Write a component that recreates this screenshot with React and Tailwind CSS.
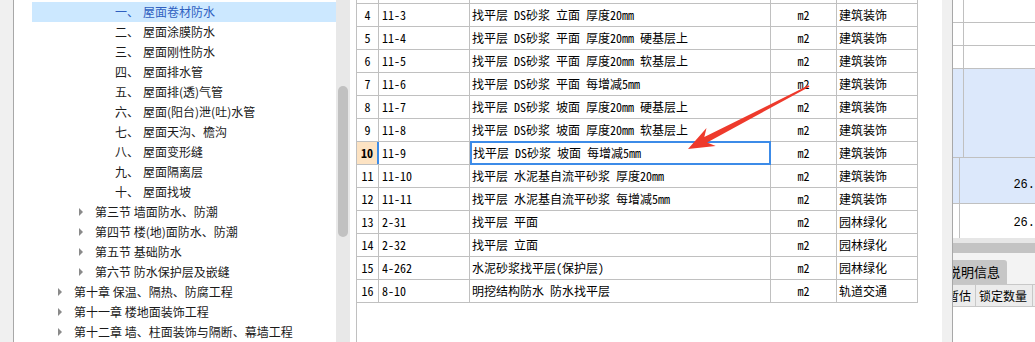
import React from 'react';

const tree = [
  { level: 3, no: '一、', text: '屋面卷材防水', selected: true },
  { level: 3, no: '二、', text: '屋面涂膜防水' },
  { level: 3, no: '三、', text: '屋面刚性防水' },
  { level: 3, no: '四、', text: '屋面排水管' },
  { level: 3, no: '五、', text: '屋面排(透)气管' },
  { level: 3, no: '六、', text: '屋面(阳台)泄(吐)水管' },
  { level: 3, no: '七、', text: '屋面天沟、檐沟' },
  { level: 3, no: '八、', text: '屋面变形缝' },
  { level: 3, no: '九、', text: '屋面隔离层' },
  { level: 3, no: '十、', text: '屋面找坡' },
  { level: 2, text: '第三节 墙面防水、防潮' },
  { level: 2, text: '第四节 楼(地)面防水、防潮' },
  { level: 2, text: '第五节 基础防水' },
  { level: 2, text: '第六节 防水保护层及嵌缝' },
  { level: 1, text: '第十章 保温、隔热、防腐工程' },
  { level: 1, text: '第十一章 楼地面装饰工程' },
  { level: 1, text: '第十二章 墙、柱面装饰与隔断、幕墙工程' },
];

// row 3 is scrolled mostly out of view, only its bottom edge shows
const rows = [
  { n: 3, code: '', name: '', unit: '', cat: '', hidden: true },
  { n: 4, code: '11-3', name: '找平层 DS砂浆 立面 厚度20mm', unit: 'm2', cat: '建筑装饰' },
  { n: 5, code: '11-4', name: '找平层 DS砂浆 平面 厚度20mm 硬基层上', unit: 'm2', cat: '建筑装饰' },
  { n: 6, code: '11-5', name: '找平层 DS砂浆 平面 厚度20mm 软基层上', unit: 'm2', cat: '建筑装饰' },
  { n: 7, code: '11-6', name: '找平层 DS砂浆 平面 每增减5mm', unit: 'm2', cat: '建筑装饰' },
  { n: 8, code: '11-7', name: '找平层 DS砂浆 坡面 厚度20mm 硬基层上', unit: 'm2', cat: '建筑装饰' },
  { n: 9, code: '11-8', name: '找平层 DS砂浆 坡面 厚度20mm 软基层上', unit: 'm2', cat: '建筑装饰' },
  { n: 10, code: '11-9', name: '找平层 DS砂浆 坡面 每增减5mm', unit: 'm2', cat: '建筑装饰', active: true },
  { n: 11, code: '11-10', name: '找平层 水泥基自流平砂浆 厚度20mm', unit: 'm2', cat: '建筑装饰' },
  { n: 12, code: '11-11', name: '找平层 水泥基自流平砂浆 每增减5mm', unit: 'm2', cat: '建筑装饰' },
  { n: 13, code: '2-31', name: '找平层 平面', unit: 'm2', cat: '园林绿化' },
  { n: 14, code: '2-32', name: '找平层 立面', unit: 'm2', cat: '园林绿化' },
  { n: 15, code: '4-262', name: '水泥砂浆找平层(保护层)', unit: 'm2', cat: '园林绿化' },
  { n: 16, code: '8-10', name: '明挖结构防水 防水找平层', unit: 'm2', cat: '轨道交通' },
];

function Caret() {
  return <span className="w-0 h-0 border-y-[4px] border-y-transparent border-l-[4px] border-l-[#8a8a8a] mr-[12px]" />;
}

function TreeRow({ item }) {
  const pad = item.level === 3 ? 'pl-[83px]' : item.level === 2 ? 'pl-[47px]' : 'pl-[26px]';
  return (
    <div
      className={`ml-[18px] h-[20px] flex items-center whitespace-nowrap ${pad} ${
        item.selected ? 'bg-[#cce8ff] text-[#2f5fbf]' : 'text-[#1a1a1a]'
      }`}
    >
      {item.level === 3 ? (
        <>
          <span className="w-[28px]">{item.no}</span>
          <span>{item.text}</span>
        </>
      ) : (
        <>
          <Caret />
          <span>{item.text}</span>
        </>
      )}
    </div>
  );
}

function GridRow({ r }) {
  return (
    <div className="flex h-[23px] border-b border-[#c0c0c0]">
      <div
        className={`w-[22px] shrink-0 border-r flex items-center justify-center text-[12px] ${
          r.active ? 'bg-[#fde3c3] font-bold border-[#3c8be8] border-r-2' : 'border-[#c0c0c0]'
        }`}
      >
        {r.hidden ? '' : r.n}
      </div>
      <div className="w-[91px] shrink-0 border-r border-[#c0c0c0] flex items-center pl-[3px]">{r.code}</div>
      <div
        className={`w-[301px] shrink-0 flex items-center whitespace-nowrap overflow-hidden ${
          r.active ? 'border-2 border-[#3c8be8] -mt-[1px] h-[24px] pl-[1px]' : 'border-r border-[#c0c0c0] pl-[2px]'
        }`}
      >
        {r.name}
      </div>
      <div className="w-[66px] shrink-0 border-r border-[#c0c0c0] flex items-center justify-center">{r.unit}</div>
      <div className="w-[81px] shrink-0 border-r border-[#c0c0c0] flex items-center pl-[2px]">{r.cat}</div>
    </div>
  );
}

export default function App() {
  return (
    <div
      className="relative w-[1035px] h-[342px] overflow-hidden flex bg-white text-[12px]"
      style={{ fontFamily: '"Noto Sans CJK SC", "Noto Sans", sans-serif' }}
    >
      {/* left strip */}
      <div className="w-[14px] shrink-0 bg-[#f0f0f0] border-r border-[#a8a8a8]" />

      {/* tree */}
      <div className="w-[322px] shrink-0 pt-[2px] leading-none">
        {tree.map((t, i) => (
          <TreeRow key={i} item={t} />
        ))}
      </div>

      {/* tree scrollbar */}
      <div className="w-[14px] shrink-0 bg-[#e8e8e8] pt-[86px] pl-[2px]">
        <div className="w-[10px] h-[151px] rounded-full bg-[#c1c1c1]" />
      </div>

      <div className="w-[6px] shrink-0" />

      {/* list grid */}
      <div
        className="w-[586px] shrink-0 border-l border-[#c0c0c0] leading-none text-black"
        style={{ fontFamily: '"Noto Sans Mono CJK SC", "Noto Sans CJK SC", "Liberation Mono", monospace' }}
      >
        <div className="w-[561px] -mt-[19px]">
          {rows.map((r) => (
            <GridRow key={r.n} r={r} />
          ))}
        </div>
      </div>

      {/* splitter */}
      <div className="w-[11px] shrink-0 bg-[#f0f0f0] border-r border-[#a8a8a8]" />

      {/* right panel */}
      <div className="w-[82px] shrink-0 overflow-hidden flex flex-col">
        <div className="flex flex-col">
          {[0, 1, 2].map((i) => (
            <div key={i} className="flex h-[23px] border-b border-[#c0c0c0]">
              <div className="w-[11px] border-r border-[#c0c0c0]" />
              <div className="flex-1" />
            </div>
          ))}
          <div className="flex h-[89px] border-b border-[#c0c0c0] bg-[#dce8fb]">
            <div className="w-[11px] border-r border-[#c0c0c0]" />
            <div className="flex-1" />
          </div>
          <div className="flex h-[46px] border-b border-[#c0c0c0] bg-[#dce8fb]">
            <div className="w-[11px] border-r border-[#c0c0c0]" />
            <div
              className="flex-1 pl-[53px] pt-[18px] whitespace-nowrap"
              style={{ fontFamily: '"Liberation Mono", monospace' }}
            >
              26.
            </div>
          </div>
          <div className="flex h-[34px]">
            <div className="w-[11px] border-r border-[#c0c0c0]" />
            <div
              className="flex-1 pl-[53px] pt-[10px] whitespace-nowrap"
              style={{ fontFamily: '"Liberation Mono", monospace' }}
            >
              26.
            </div>
          </div>
        </div>

        {/* horizontal scrollbar */}
        <div className="h-[18px] bg-[#e6e6e6] pt-[5px]">
          <div className="h-[10px] bg-[#c3c3c3]" />
        </div>

        <div className="flex-1 bg-[#f3f3f3] pt-[7px]">
          <div className="-ml-[12px] w-[66px] h-[24px] bg-[#c6c6c6] rounded-tr-[3px] flex items-center pl-[7px] text-[13px] whitespace-nowrap">
            说明信息
          </div>
          <div className="-ml-[30px] flex h-[23px] bg-[#ececec] border-y border-[#c8c8c8] text-[12px] whitespace-nowrap">
            <div className="w-[53px] shrink-0 border-r border-[#c8c8c8] flex items-center pl-[24px]">暂估</div>
            <div className="w-[57px] shrink-0 border-r border-[#c8c8c8] flex items-center pl-[3px]">锁定数量</div>
          </div>
          <div className="h-[40px] bg-white" />
        </div>
      </div>

      {/* annotation arrow */}
      <svg className="absolute inset-0 pointer-events-none" width="1035" height="342">
        <polygon
          points="688,149 715.7,145.9 707.1,142.5 809.4,86.7 808.6,85.3 704.3,137.1 706.5,128.1"
          fill="#ee3a2c"
        />
      </svg>
    </div>
  );
}
